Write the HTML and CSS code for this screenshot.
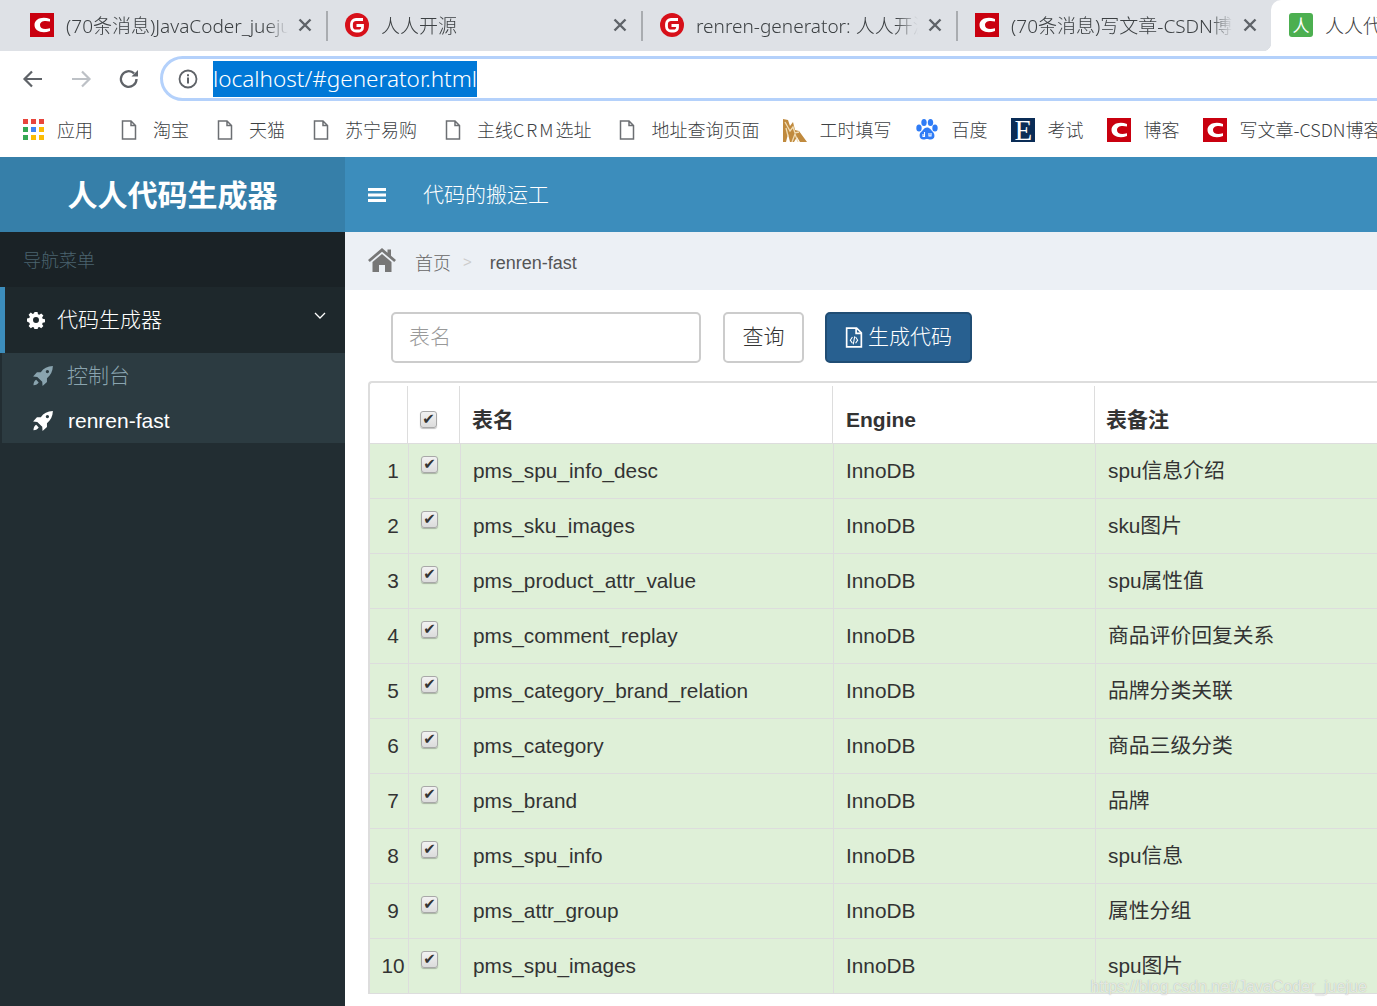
FILE: index.html
```html
<!DOCTYPE html>
<html lang="zh-CN">
<head>
<meta charset="utf-8">
<title>人人代码生成器</title>
<link rel="stylesheet" href="styles.css">
</head>
<body>
<svg class="defs" width="0" height="0" aria-hidden="true">
  <defs>
    <symbol id="csdn" viewBox="0 0 24 24"><rect width="24" height="24" fill="#c9000f"/><path d="M20 6C12 3 4.500 6 4.500 12S12 21 20 18v-2.800C14 17 10 15.500 10 12s4-5 10-3.500z" fill="#fff"/></symbol>
    <symbol id="gitee" viewBox="0 0 24 24"><circle cx="12" cy="12" r="12" fill="#d7101a"/><path d="M18 6.500H11a4.500 4.500 0 0 0-4.500 4.500v2.500a4.500 4.500 0 0 0 4.500 4.500h3a3.500 3.500 0 0 0 3.500-3.500v-2H11.500" fill="none" stroke="#fff" stroke-width="2.800"/></symbol>
    <symbol id="page" viewBox="0 0 16 20"><path d="M1.500 1h8.500l4.500 4.500V19h-13z M10 1v4.500h4.500" fill="none" stroke="#6c6f73" stroke-width="1.500"/></symbol>
    <symbol id="rocket" viewBox="0 0 20 20"><path d="M19 1c-5 .2-8.500 2-11 5.500H4.500L1 10.500l3.800.3 4.500 4.500.3 3.700 4-3.500v-3.500C17 9.500 18.800 6 19 1zM14 4.500a1.500 1.500 0 1 1 0 3 1.500 1.500 0 0 1 0-3zM3.800 13.500c-1.500.8-2.300 2.500-2.500 4.800 2.300-.2 4-1 4.800-2.500z"/></symbol>
    <symbol id="close" viewBox="0 0 14 14"><path d="M1.500 1.500l11 11M12.500 1.500l-11 11" fill="none" stroke="#5f6368" stroke-width="2.400"/></symbol>
  </defs>
</svg>

<div class="tabstrip">
  <div class="tab">
    <svg class="fav"><use href="#csdn"/></svg><span class="tab-title">(70条消息)JavaCoder_juejue</span><svg class="tab-x"><use href="#close"/></svg>
  </div>
  <div class="tab">
    <svg class="fav"><use href="#gitee"/></svg><span class="tab-title">人人开源</span><svg class="tab-x"><use href="#close"/></svg>
  </div>
  <div class="tab">
    <svg class="fav"><use href="#gitee"/></svg><span class="tab-title">renren-generator: 人人开源项目</span><svg class="tab-x"><use href="#close"/></svg>
  </div>
  <div class="tab tab-last">
    <svg class="fav"><use href="#csdn"/></svg><span class="tab-title">(70条消息)写文章-CSDN博客</span><svg class="tab-x"><use href="#close"/></svg>
  </div>
  <div class="tab tab-active">
    <span class="fav fav-green">人</span><span class="tab-title">人人代码生成器</span>
  </div>
</div>

<div class="addressbar">
  <svg class="nav-ic" viewBox="0 0 24 24"><path d="M21 12H4M11 4.500 3.500 12l7.500 7.500" fill="none" stroke="#5f6368" stroke-width="2.200"/></svg>
  <svg class="nav-ic" viewBox="0 0 24 24"><path d="M3 12h17M13 4.500l7.500 7.500-7.500 7.500" fill="none" stroke="#bdc1c6" stroke-width="2.200"/></svg>
  <svg class="nav-ic" viewBox="0 0 24 24"><path d="M19.500 12a7.800 7.800 0 1 1-2.400-5.600" fill="none" stroke="#5f6368" stroke-width="2.300"/><path d="M21 3v6.500h-6.500z" fill="#5f6368"/></svg>
  <div class="omnibox">
    <svg class="info" viewBox="0 0 20 20"><circle cx="10" cy="10" r="8.500" fill="none" stroke="#5f6368" stroke-width="1.800"/><path d="M10 8.500v6M10 5.200v2" stroke="#5f6368" stroke-width="2"/></svg>
    <span class="url">localhost/#generator.html</span>
  </div>
</div>

<div class="bookmarks">
  <div class="bm">
    <svg class="bm-ic apps" viewBox="0 0 21 21"><g fill="#e8453c"><rect width="5" height="5"/><rect x="8" width="5" height="5"/><rect x="16" width="5" height="5"/></g><g fill="#4285f4"><rect x="8" y="8" width="5" height="5"/><rect x="16" y="8" width="5" height="5" fill="#fbbc05"/><rect y="8" width="5" height="5" fill="#34a853"/></g><g fill="#fbbc05"><rect x="8" y="16" width="5" height="5"/><rect x="16" y="16" width="5" height="5"/><rect y="16" width="5" height="5" fill="#34a853"/></g></svg>
    <span class="bm-text">应用</span>
  </div>
  <div class="bm"><svg class="bm-page"><use href="#page"/></svg><span class="bm-text">淘宝</span></div>
  <div class="bm"><svg class="bm-page"><use href="#page"/></svg><span class="bm-text">天猫</span></div>
  <div class="bm"><svg class="bm-page"><use href="#page"/></svg><span class="bm-text">苏宁易购</span></div>
  <div class="bm"><svg class="bm-page"><use href="#page"/></svg><span class="bm-text">主线<span class="wide">CRM</span>选址</span></div>
  <div class="bm"><svg class="bm-page"><use href="#page"/></svg><span class="bm-text">地址查询页面</span></div>
  <div class="bm">
    <svg class="bm-ic" viewBox="0 0 24 24"><path d="M0 24V1l5 1 2 6 3-4 2 8 4 1 8 11h-7l-3-5-3 5H7l-2-8-2 8z" fill="#c08a3e"/><path d="M2 4l5 9 3-4 2 6 4-1M9 24l3-8 3 8M3 10l2 8" fill="none" stroke="#f0dcb4" stroke-width="1.300"/></svg>
    <span class="bm-text">工时填写</span>
  </div>
  <div class="bm">
    <svg class="bm-ic" viewBox="0 0 24 24"><g fill="#2f7cf6"><ellipse cx="4" cy="10" rx="2.700" ry="3.500"/><ellipse cx="9" cy="4.500" rx="2.700" ry="3.500"/><ellipse cx="15.500" cy="4.500" rx="2.700" ry="3.500"/><ellipse cx="20" cy="10" rx="2.700" ry="3.500"/><path d="M12 9.500c-3 0-4 3-6 4.500s-2.500 7.500 2.500 7.500c1.500 0 2.300-.5 3.500-.5s2 .5 3.500.5c5 0 4.500-5.500 2.500-7.500s-3-4.500-6-4.500z"/></g><path d="M9.500 14v4.500h-1.500v-2.500M14 15v3h2v-3" fill="none" stroke="#fff" stroke-width="1.100"/></svg>
    <span class="bm-text">百度</span>
  </div>
  <div class="bm"><span class="bm-ic fav-e">E</span><span class="bm-text">考试</span></div>
  <div class="bm"><svg class="bm-ic"><use href="#csdn"/></svg><span class="bm-text">博客</span></div>
  <div class="bm"><svg class="bm-ic"><use href="#csdn"/></svg><span class="bm-text">写文章-CSDN博客</span></div>
</div>

<div class="app">
  <aside class="sidebar">
    <div class="logo">人人代码生成器</div>
    <div class="nav-header">导航菜单</div>
    <div class="nav-group">
      <svg class="gear" viewBox="0 0 20 20"><path fill="#fff" fill-rule="evenodd" d="M8.300 1h3.400l.5 2.500 1.500.6 2.100-1.400 2.400 2.400-1.400 2.100.6 1.500 2.600.5v3.400l-2.600.5-.6 1.500 1.400 2.100-2.400 2.400-2.100-1.400-1.500.6-.5 2.600H8.300l-.5-2.600-1.500-.6-2.100 1.400-2.400-2.400 1.400-2.100-.6-1.500L0 11.700V8.300l2.600-.5.6-1.500-1.400-2.100 2.400-2.400 2.100 1.400 1.500-.6zM10 6.700a3.300 3.300 0 1 0 0 6.600 3.300 3.300 0 0 0 0-6.600z"/></svg>
      <span class="nav-group-label">代码生成器</span>
      <svg class="chev" viewBox="0 0 12 8"><path d="M1 1l5 5 5-5" fill="none" stroke="#fff" stroke-width="1.300"/></svg>
    </div>
    <div class="subnav">
      <div class="subitem subitem-muted"><svg class="rocket"><use href="#rocket"/></svg><span>控制台</span></div>
      <div class="subitem subitem-on"><svg class="rocket"><use href="#rocket"/></svg><span>renren-fast</span></div>
    </div>
  </aside>

  <main class="main">
    <header class="topbar">
      <svg class="burger" viewBox="0 0 18 14"><path d="M0 0h18v3H0zM0 5.500h18v3H0zM0 11h18v3H0z" fill="#fff"/></svg>
      <span class="topbar-title">代码的搬运工</span>
    </header>
    <nav class="crumbs">
      <svg class="home" viewBox="0 0 28 24"><path fill="#777" d="M14 0 0 12l1.800 2L14 3.700 26.200 14l1.800-2-5-4.300V1.500h-3.500v3.200zM14 6 4.500 14v10H11v-7h6v7h6.500V14z"/></svg>
      <span class="crumb-home">首页</span>
      <span class="crumb-sep">&gt;</span>
      <span class="crumb-cur">renren-fast</span>
    </nav>
    <section class="content">
      <div class="toolbar">
        <input class="search" type="text" placeholder="表名">
        <button class="btn btn-default" type="button"><span class="btn-label">查询</span></button>
        <button class="btn btn-primary" type="button">
          <svg class="file-ic" viewBox="0 0 16 20"><path d="M1 1h9.500L15 5.500V19H1z M10 1v5h5" fill="none" stroke="#fff" stroke-width="1.600"/><path d="M6.500 9.500 4.500 12.500l2 3M9.500 9.500l2 3-2 3M8.700 9l-1.400 7.500" fill="none" stroke="#fff" stroke-width="1"/></svg><span class="btn-label">生成代码</span>
        </button>
      </div>
      <div class="grid">
        <div class="grid-head">
          <div class="cell c-n"></div>
          <div class="cell c-c"><input class="cb" type="checkbox" checked></div>
          <div class="cell c-a">表名</div>
          <div class="cell c-b">Engine</div>
          <div class="cell c-d">表备注</div>
        </div>
        <div class="grid-row"><div class="cell c-n">1</div><div class="cell c-c"><input class="cb" type="checkbox" checked></div><div class="cell c-a">pms_spu_info_desc</div><div class="cell c-b">InnoDB</div><div class="cell c-d">spu信息介绍</div></div>
        <div class="grid-row"><div class="cell c-n">2</div><div class="cell c-c"><input class="cb" type="checkbox" checked></div><div class="cell c-a">pms_sku_images</div><div class="cell c-b">InnoDB</div><div class="cell c-d">sku图片</div></div>
        <div class="grid-row"><div class="cell c-n">3</div><div class="cell c-c"><input class="cb" type="checkbox" checked></div><div class="cell c-a">pms_product_attr_value</div><div class="cell c-b">InnoDB</div><div class="cell c-d">spu属性值</div></div>
        <div class="grid-row"><div class="cell c-n">4</div><div class="cell c-c"><input class="cb" type="checkbox" checked></div><div class="cell c-a">pms_comment_replay</div><div class="cell c-b">InnoDB</div><div class="cell c-d">商品评价回复关系</div></div>
        <div class="grid-row"><div class="cell c-n">5</div><div class="cell c-c"><input class="cb" type="checkbox" checked></div><div class="cell c-a">pms_category_brand_relation</div><div class="cell c-b">InnoDB</div><div class="cell c-d">品牌分类关联</div></div>
        <div class="grid-row"><div class="cell c-n">6</div><div class="cell c-c"><input class="cb" type="checkbox" checked></div><div class="cell c-a">pms_category</div><div class="cell c-b">InnoDB</div><div class="cell c-d">商品三级分类</div></div>
        <div class="grid-row"><div class="cell c-n">7</div><div class="cell c-c"><input class="cb" type="checkbox" checked></div><div class="cell c-a">pms_brand</div><div class="cell c-b">InnoDB</div><div class="cell c-d">品牌</div></div>
        <div class="grid-row"><div class="cell c-n">8</div><div class="cell c-c"><input class="cb" type="checkbox" checked></div><div class="cell c-a">pms_spu_info</div><div class="cell c-b">InnoDB</div><div class="cell c-d">spu信息</div></div>
        <div class="grid-row"><div class="cell c-n">9</div><div class="cell c-c"><input class="cb" type="checkbox" checked></div><div class="cell c-a">pms_attr_group</div><div class="cell c-b">InnoDB</div><div class="cell c-d">属性分组</div></div>
        <div class="grid-row"><div class="cell c-n">10</div><div class="cell c-c"><input class="cb" type="checkbox" checked></div><div class="cell c-a">pms_spu_images</div><div class="cell c-b">InnoDB</div><div class="cell c-d">spu图片</div></div>
      </div>
      <div class="watermark">https://blog.csdn.net/JavaCoder_juejue</div>
    </section>
  </main>
</div>
</body>
</html>
```
FILE: styles.css
```css
* { box-sizing: border-box; }
html, body { margin: 0; padding: 0; width: 1377px; height: 1006px; overflow: hidden; background: #fff; }
body { font-family: "Liberation Sans", "Noto Sans CJK SC", sans-serif; color: #333; }
.defs { position: absolute; }

/* browser chrome */
.tabstrip { display: flex; height: 51px; padding-left: 12px; background: #dee1e6; width: 1377px; overflow: hidden; }
.tab { position: relative; flex: 0 0 315px; display: flex; align-items: center; padding: 0 0 1px 18px; }
.tab::after { content: ""; position: absolute; right: -1px; top: 11px; height: 30px; width: 2px; background: #a9acb0; }
.tab-last::after { display: none; }
.fav { flex: 0 0 24px; width: 24px; height: 24px; margin-right: 12px; }
.fav-green { background: #4caf50; color: #fff; border-radius: 3px; font: 17px/24px "Noto Sans CJK SC", sans-serif; text-align: center; }
.tab-title { flex: 0 0 222px; width: 222px; margin-top: 1px; overflow: hidden; white-space: nowrap; font: 300 19px/26px "Noto Sans", "Noto Sans CJK SC", sans-serif; color: #3c4043; -webkit-mask-image: linear-gradient(90deg, #000 90%, transparent); mask-image: linear-gradient(90deg, #000 90%, transparent); }
.tab-x { flex: 0 0 14px; width: 14px; height: 14px; margin-left: 10px; }
.tab-active { background: #fff; border-radius: 10px 0 0 0; flex: 0 0 200px; margin-left: -1px; overflow: visible; }
.tab-active::after { display: none; }
.tab-active::before { content: ""; position: absolute; left: -8px; bottom: 0; width: 8px; height: 8px; background: radial-gradient(circle at 0 0, transparent 8px, #fff 8.500px); }
.tab-active .tab-title { -webkit-mask-image: none; mask-image: none; color: #3c4043; }

.addressbar { display: flex; align-items: center; height: 57px; padding: 0 0 2px 21px; gap: 24px; background: #fff; }
.nav-ic { flex: 0 0 24px; width: 24px; height: 24px; }
.omnibox { flex: 0 0 1300px; margin-left: -5px; height: 45px; border: 3px solid #b4d1fb; border-radius: 23px; display: flex; align-items: center; padding-left: 15px; }
.info { width: 20px; height: 20px; margin-right: 15px; }
.url { background: #0078d7; color: #fff; font: 300 22.500px/36px "Noto Sans", sans-serif; }

.bookmarks { display: flex; align-items: center; height: 49px; padding: 0 0 6px 22px; background: #fff; white-space: nowrap; overflow: hidden; width: 1377px; }
.bm { display: flex; align-items: center; margin-right: 24px; font: 300 18px/24px "Noto Sans CJK SC", sans-serif; color: #3c4043; flex: none; }
.bm-text { margin-top: -1px; }
.wide { letter-spacing: 2px; }
.bm-ic { width: 24px; height: 24px; margin-right: 12px; flex: none; }
.apps { width: 21px; height: 21px; margin-right: 13px; margin-left: 1px; }
.bm-page { width: 16px; height: 20px; margin-left: 4px; margin-right: 16px; flex: none; }
.fav-e { background: #0a2c56; color: #fff; font: 400 29px/24px "Liberation Serif", serif; text-align: center; }

/* app */
.app { display: flex; height: 849px; }
.sidebar { flex: 0 0 345px; background: #222d32; }
.logo { height: 75px; padding-bottom: 2px; background: #367fa9; color: #fff; font: 700 30px/73px "Noto Sans CJK SC", sans-serif; text-align: center; }
.nav-header { height: 55px; background: #1a2226; color: #4b646f; font: 300 18px/55px "Noto Sans CJK SC", sans-serif; padding-left: 23px; }
.nav-group { position: relative; height: 66px; background: #1e282c; border-left: 5px solid #3c8dbc; display: flex; align-items: center; color: #fff; padding-left: 22px; }
.gear { width: 18px; height: 18px; margin-right: 12px; }
.nav-group-label { font: 300 21px/28px "Noto Sans CJK SC", sans-serif; margin-top: -4px; }
.chev { position: absolute; right: 19px; top: 25px; width: 12px; height: 8px; }
.subnav { margin-left: 2px; height: 90px; background: #2c3b41; }
.subitem { height: 45px; display: flex; align-items: center; padding-left: 30px; font-size: 21px; }
.rocket { flex: 0 0 22px; width: 22px; height: 22px; margin-right: 14px; fill: currentColor; }
.subitem-muted { color: #8aa4af; font-family: "Noto Sans CJK SC", sans-serif; font-weight: 300; }
.subitem-muted span { margin-top: -3px; margin-left: -1px; }
.subitem-on { color: #fff; }

.main { flex: 1; min-width: 0; display: flex; flex-direction: column; }
.topbar { height: 75px; background: #3c8dbc; color: #fff; display: flex; align-items: center; padding-left: 23px; }
.burger { width: 18px; height: 14px; margin-right: 37px; }
.topbar-title { font: 300 21px/28px "Noto Sans CJK SC", sans-serif; margin-top: -3px; }
.crumbs { height: 58px; background: #ecf0f5; display: flex; align-items: center; padding-left: 23px; font-size: 18px; color: #666; }
.home { width: 28px; height: 24px; margin-right: 20px; margin-top: -3px; }
.crumb-home { font-family: "Noto Sans CJK SC", sans-serif; font-weight: 300; margin-top: 1px; margin-left: -1px; }
.crumb-sep { color: #ccc; margin: 0 18px 0 12px; font-size: 15px; }
.crumb-cur { color: #555; margin-top: 4px; }

.content { position: relative; flex: 1; background: #fff; padding: 22px 0 0 23px; overflow: hidden; }
.toolbar { display: flex; padding-left: 23px; height: 51px; }
.search { width: 310px; height: 51px; border: 2px solid #ccc; border-radius: 5px; padding: 0 16px 5px; font: 300 21px "Noto Sans CJK SC", sans-serif; background: #fff; outline: none; }
.search::placeholder { color: #999; opacity: 1; }
.btn { height: 51px; border-radius: 5px; font: 300 21px/1 "Noto Sans CJK SC", sans-serif; display: flex; align-items: center; padding: 0; margin-left: 22px; }
.btn-label { margin-top: -5px; }
.btn-default { width: 81px; background: #fff; border: 2px solid #ccc; color: #333; justify-content: center; }
.btn-primary { width: 147px; margin-left: 21px; background: #286090; border: 2px solid #204d74; color: #fff; justify-content: center; }
.file-ic { width: 18px; height: 21px; margin-right: 5px; }

.grid { margin-top: 18px; border: 2px solid #ddd; border-width: 2px 0 1px 2px; border-radius: 4px 0 0 0; width: 1100px; background: #fff; }
.grid-head { display: flex; height: 60px; padding-top: 3px; }
.grid-head .cell { border-right: 1px solid #ddd; font-size: 21px; font-weight: 700; padding-top: 22px; }
.grid-head .c-n { width: 38px; }
.grid-head .c-c { width: 52px; padding-left: 12px; padding-top: 25px; }
.grid-head .c-a { width: 373px; padding-left: 12px; font-family: "Noto Sans CJK SC", sans-serif; padding-top: 17px; }
.grid-head .c-b { width: 262px; padding-left: 13px; }
.grid-head .c-d { border-right: 0; flex: 1; padding-left: 11px; font-family: "Noto Sans CJK SC", sans-serif; padding-top: 17px; }
.grid-row { display: flex; height: 55px; background: #dff0d8; border-top: 1px solid #ddd; font-size: 20.800px; line-height: 54px; }
.grid-row .cell { border-right: 1px solid #ddd; white-space: nowrap; }
.grid-row .c-n { width: 39px; text-align: center; padding-left: 8px; }
.grid-row .c-c { width: 52px; padding-left: 12px; padding-top: 12px; line-height: 0; }
.grid-row .c-a { width: 373px; padding-left: 12px; }
.grid-row .c-b { width: 262px; padding-left: 12px; }
.grid-row .c-d { flex: 1; border-right: 0; padding-left: 12px; }
.cb { appearance: none; -webkit-appearance: none; display: flex; align-items: center; justify-content: center; width: 17px; height: 17px; margin: 0; border: 1px solid #a8a8a8; border-radius: 3px; background: linear-gradient(#f2f2f2, #dcdcdc); box-shadow: 0 1px 1px rgba(0,0,0,.25); }
.cb::before { content: "✔"; font: 700 15px/15px "DejaVu Sans", sans-serif; color: #333; }
.watermark { position: absolute; right: 10px; top: 687px; color: rgba(255,255,255,.7); font-size: 16px; line-height: 20px; text-shadow: 0 0 1px rgba(110,110,110,.55); }
```
